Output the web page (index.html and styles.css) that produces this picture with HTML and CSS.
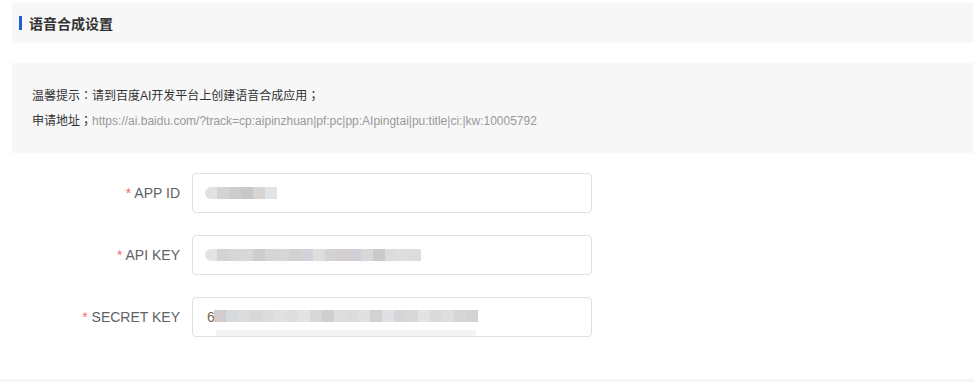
FILE: index.html
```html
<!DOCTYPE html>
<html lang="zh-CN">
<head>
<meta charset="utf-8">
<title>语音合成设置</title>
<link rel="stylesheet" href="styles.css">
</head>
<body>
<div class="page">
  <div class="panel-head"><span class="bar"></span><span class="title">语音合成设置</span></div>
  <div class="tips">
    <p class="tip-line">温馨提示<span class="punc" lang="zh-TW">：</span>请到百度AI开发平台上创建语音合成应用<span class="punc" lang="zh-TW">；</span></p>
    <p class="tip-line">申请地址<span class="punc" lang="zh-TW">；</span><span class="url">https://ai.baidu.com/?track=cp:aipinzhuan|pf:pc|pp:AIpingtai|pu:title|ci:|kw:10005792</span></p>
  </div>
  <div class="form">
    <div class="row">
      <label class="label"><span class="req">*</span> APP ID</label>
      <div class="input">
        <div class="blur">
          <i class="px first" style="background:#e2e2e2"></i><i class="px" style="background:#d6d3d3"></i><i class="px" style="background:#cccdd1"></i><i class="px" style="background:#c8c8c8"></i><i class="px" style="background:#d7d4d4"></i><i class="px" style="background:#e0e4e7"></i>
        </div>
      </div>
    </div>
    <div class="row">
      <label class="label"><span class="req">*</span> API KEY</label>
      <div class="input">
        <div class="blur">
          <i class="px first" style="background:#e3e3e3"></i><i class="px" style="background:#d3d3d6"></i><i class="px" style="background:#d6d6d6"></i><i class="px" style="background:#d8d8d8"></i><i class="px" style="background:#cdcdd0"></i><i class="px" style="background:#d5d5d7"></i><i class="px" style="background:#d6d6d6"></i><i class="px" style="background:#d3d0d0"></i><i class="px" style="background:#d0d3d9"></i><i class="px" style="background:#dedede"></i><i class="px" style="background:#d3d3d6"></i><i class="px" style="background:#d6cfcf"></i><i class="px" style="background:#ced2d6"></i><i class="px" style="background:#d8d8d8"></i><i class="px" style="background:#cacaca"></i><i class="px" style="background:#dcdcdc"></i><i class="px" style="background:#dedee0"></i><i class="px" style="background:#dcdcdc"></i>
        </div>
      </div>
    </div>
    <div class="row">
      <label class="label"><span class="req">*</span> SECRET KEY</label>
      <div class="input">
        <span class="lead">6</span>
        <div class="blur wide">
          <i class="px" style="background:#d3cccc"></i><i class="px" style="background:#d6dade"></i><i class="px" style="background:#dcdcdc"></i><i class="px" style="background:#d8d8da"></i><i class="px" style="background:#dcdcdc"></i><i class="px" style="background:#e0e0e0"></i><i class="px" style="background:#dedede"></i><i class="px" style="background:#e2e2e2"></i><i class="px" style="background:#d8d8d8"></i><i class="px" style="background:#cfcfd1"></i><i class="px" style="background:#dedede"></i><i class="px" style="background:#dcdcdc"></i><i class="px" style="background:#e0e0e0"></i><i class="px" style="background:#d3d3d6"></i><i class="px" style="background:#dfe0e2"></i><i class="px" style="background:#d6d6d8"></i><i class="px" style="background:#d8d8d8"></i><i class="px" style="background:#e2e2e2"></i><i class="px" style="background:#dadada"></i><i class="px" style="background:#dedee0"></i><i class="px" style="background:#d6d6d6"></i><i class="px" style="background:#d3d3d6"></i>
        </div>
      </div>
    </div>
  </div>
</div>
<div class="foot"></div>
</body>
</html>
```
FILE: styles.css
```css
html, body {
  margin: 0;
  padding: 0;
  background: #fff;
}
body {
  font-family: "Liberation Sans", "Noto Sans CJK SC", sans-serif;
  color: #333;
  height: 382px;
  overflow: hidden;
  display: flex;
  flex-direction: column;
}
.page {
  padding: 3px 0 0 12px;
  flex: 1;
}
.panel-head {
  height: 40px;
  background: #f7f7f7;
  display: flex;
  align-items: center;
  gap: 7px;
  padding-left: 7px;
}
.bar {
  width: 3px;
  height: 14px;
  background: #1f5fd6;
}
.title {
  font-family: "Noto Sans CJK SC", sans-serif;
  font-size: 14px;
  font-weight: bold;
  color: #333;
  line-height: 14px;
}
.tips {
  margin-top: 20px;
  height: 90px;
  box-sizing: border-box;
  background: #f7f7f7;
  padding: 20px 0 0 20px;
}
.tip-line {
  margin: 0;
  font-size: 12px;
  line-height: 24px;
  color: #333;
  white-space: nowrap;
}
.punc {
  font-family: "Noto Sans CJK TC", sans-serif;
}
.url {
  color: #999;
}
.form {
  margin-top: 20px;
  display: flex;
  flex-direction: column;
  gap: 22px;
}
.row {
  display: flex;
  align-items: center;
  height: 40px;
}
.label {
  width: 168px;
  padding-right: 12px;
  text-align: right;
  font-size: 14px;
  color: #606266;
}
.req {
  color: #f56c6c;
}
.input {
  width: 400px;
  height: 40px;
  box-sizing: border-box;
  border: 1px solid #dcdfe6;
  border-radius: 4px;
  display: flex;
  align-items: center;
  padding-left: 12px;
}
.lead {
  font-size: 14px;
  color: #7a6a50;
  width: 7px;
  overflow: hidden;
  margin-left: 2px;
}
.blur {
  display: flex;
  height: 12px;
}
.px {
  display: block;
  width: 12px;
  height: 12px;
}
.px.first {
  border-radius: 6px 0 0 6px;
}
.blur.wide {
  height: 20px;
  align-items: flex-start;
  margin-top: 6px;
  box-shadow: 0 8px 0 -2px #f4f4f4;
}
.foot {
  height: 3px;
  background: #f5f5f5;
}
```
